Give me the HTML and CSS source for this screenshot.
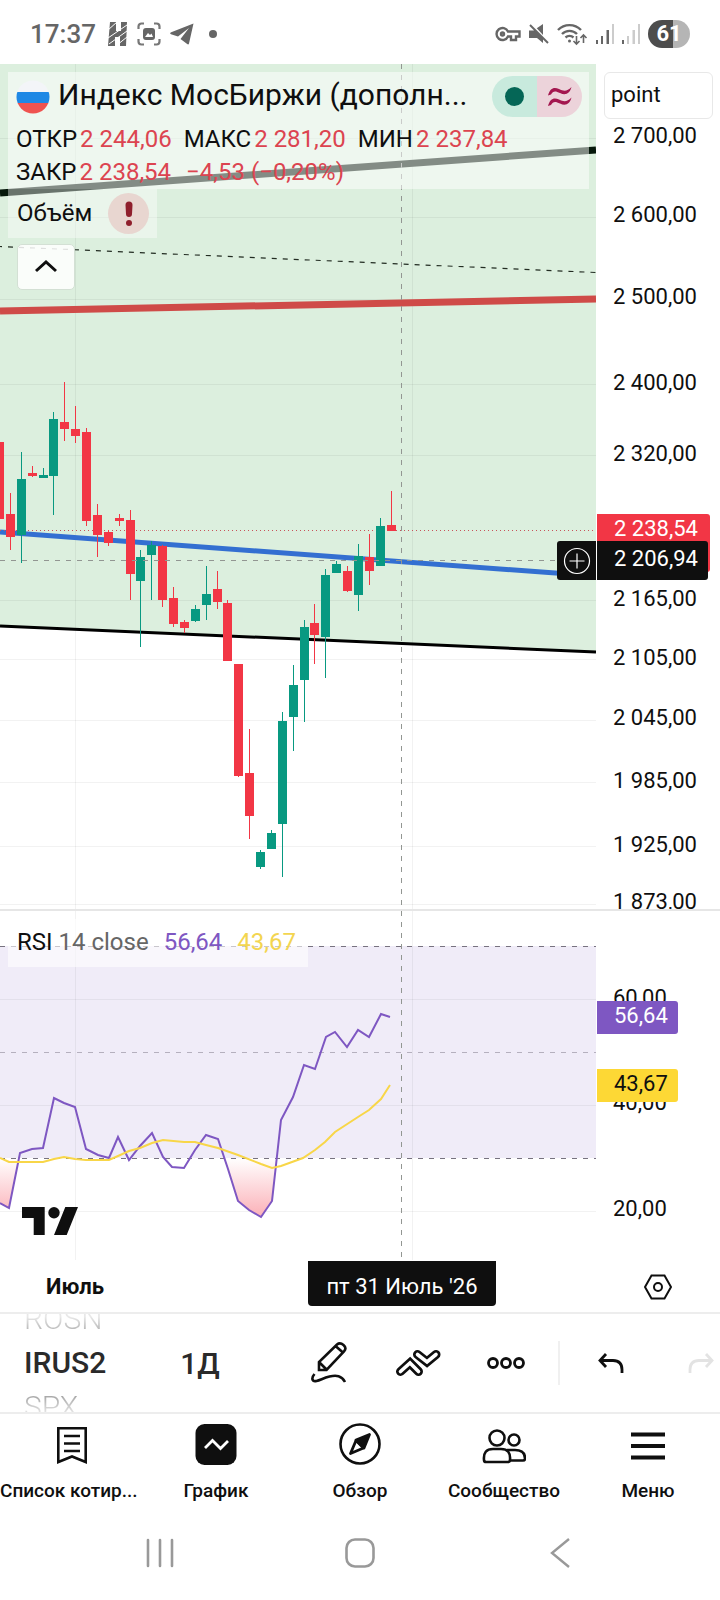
FILE: index.html
```html
<!DOCTYPE html>
<html lang="ru">
<head>
    <meta charset="UTF-8">
    <meta name="viewport" content="width=device-width, initial-scale=1.0">
    <title>IRUS2 – Индекс МосБиржи</title>
    <link rel="stylesheet" href="styles.css">
</head>
<body>
    <header class="status-bar">
        <span class="clock">17:37</span>
        <svg width="20" height="24" viewBox="0 0 20 24">
            <path d="M2 0h6v9h5V0h6l-1 24h-6v-9H7v9H0z" fill="#666"/>
            <path d="M0 8L9 0M0 16L19 3M1 22L19 9M9 23l10-8" stroke="#fff" stroke-width="1"/>
        </svg>
        <svg width="24" height="24" viewBox="0 0 24 24" fill="none" stroke="#777" stroke-width="2.2">
            <path d="M1.500 7V4.500a3 3 0 0 1 3-3H7M17 1.500h2.500a3 3 0 0 1 3 3V7M22.500 17v2.500a3 3 0 0 1-3 3H17M7 22.500H4.500a3 3 0 0 1-3-3V17"/>
            <rect x="6" y="6" width="12" height="12" rx="3" fill="#666" stroke="none"/>
            <path d="M8 15l3-4 2 2 1.500-1.500L16 15z" fill="#fff" stroke="none"/>
        </svg>
        <svg width="24" height="22" viewBox="0 0 24 22" fill="#666">
            <path d="M23.500 0.500L19 20.500c-.3 1-1 1.200-1.800.6l-6.700-5L19 5 8 13.500 1 11.200c-1.200-.4-1.200-1.400.2-2z"/>
        </svg>
        <span class="status-dot"></span>
        <div class="status-right">
            <svg width="26" height="16" viewBox="0 0 26 16" fill="none" stroke="#666" stroke-width="2.400">
                <path d="M13 5.500A6 6 0 1 0 13 10.500H16V14H21V10.500H24.500V5.500z"/>
                <circle cx="7.500" cy="8" r="1.500"/>
            </svg>
            <svg width="20" height="20" viewBox="0 0 20 20">
                <path d="M0 6.500h4.500L14 0v19L8 14H0z" fill="#666"/>
                <path d="M2.500 0L20 19" stroke="#fff" stroke-width="2"/>
                <path d="M1 1l18 18" stroke="#666" stroke-width="2"/>
            </svg>
            <svg width="31" height="24" viewBox="0 0 31 24" fill="none" stroke="#666" stroke-width="2.400">
                <path d="M1 8a16 16 0 0 1 23 0M5 12a10.500 10.500 0 0 1 15 0M8.500 15.500a6 6 0 0 1 8 0"/>
                <circle cx="12.500" cy="19" r="1.500" fill="#666" stroke="none"/>
                <path d="M19.500 14v8M16.500 19l3 3 3-3M26.500 21v-8M23.500 16l3-3 3 3" stroke-width="1.600"/>
            </svg>
            <svg width="18" height="20" viewBox="0 0 18 20" fill="#666">
                <path d="M0 16h2v4H0zM5 12h2v8H5zM10.500 6h2.500v14h-2.500z"/>
                <path d="M16 0h2v20h-2z" fill="#ccc"/>
            </svg>
            <svg width="18" height="20" viewBox="0 0 18 20" fill="#ccc">
                <path d="M0 16h2v4H0z" fill="#666"/>
                <path d="M5 12h2v8H5zM10.500 6h2.500v14h-2.500zM16 0h2v20h-2z"/>
            </svg>
            <span class="battery">61</span>
        </div>
    </header>

    <main class="chart">
        <section class="pane">
            <div class="plot">
                <svg class="plot-svg" height="845" viewBox="0 0 596 845" preserveAspectRatio="xMaxYMin slice">
                    <path d="M0 0H596V588L0 562z" fill="#dcefde"/>
                    <path class="grid" d="M0 74.500H596M0 153.500H596M0 235.500H596M0 320.500H596M0 391.500H596M0 536.500H596M0 595.500H596M0 656.500H596M0 718.500H596M0 782.500H596M0 840.500H596M75.500 0V845M412.500 0V845"/>
                    <path d="M0 129L596 86" stroke="#06180b" stroke-width="7"/>
                    <path d="M0 182.500L596 208.500" stroke="#222c22" stroke-width="1.200" stroke-dasharray="5 6" stroke-dashoffset="3"/>
                    <path d="M0 247L596 235" stroke="#cf4b48" stroke-width="7"/>
                    <path d="M0 468L596 512" stroke="#336fd1" stroke-width="5"/>
                    <path d="M0 562L596 588" stroke="#000" stroke-width="3"/>
                    <path d="M0 466.500H596" stroke="#c8525a" stroke-dasharray="1 3"/>
                    <g id="candles"></g>
                    <path class="crosshair" d="M0 496.500H596M401.500 0V845"/>
                </svg>

                <div class="legend">
                    <div class="legend-main">
                        <div class="legend-title">
                            <svg width="34" height="34" viewBox="0 0 34 34">
                                <clipPath id="flag"><circle cx="17" cy="17" r="16.500"/></clipPath>
                                <g clip-path="url(#flag)">
                                    <path d="M0 0h34v12H0z" fill="#f3f5f8"/>
                                    <path d="M0 12h34v11H0z" fill="#1e88e5"/>
                                    <path d="M0 23h34v11H0z" fill="#ef5350"/>
                                </g>
                            </svg>
                            <h1>Индекс МосБиржи (дополн...</h1>
                            <button class="status-pill" aria-label="Статус рынка">
                                <span class="pill-open"><span class="pill-dot"></span></span>
                                <span class="pill-delay">
                                    <svg width="24" height="20" viewBox="0 0 24 20" fill="#a3174f">
                                        <path d="M0 8.500C2 1 6-.5 11 2c5 2.500 8 2.500 12.500-2C22 6 18 9 12 6 7 3.500 5 4 3 7.500z"/>
                                        <path d="M0 19C2 11.500 6 10 11 12.500c5 2.500 8 2.500 12.500-2-1.500 6-5.500 9-11.500 6-5-2.500-7-2-9 1.500z"/>
                                    </svg>
                                </span>
                            </button>
                        </div>
                        <div class="ohlc">
                            <span>ОТКР<b>2 244,06</b></span>
                            <span>МАКС<b>2 281,20</b></span>
                            <span>МИН<b>2 237,84</b></span>
                            <span>ЗАКР<b>2 238,54</b></span>
                            <span><b>−4,53 (−0,20%)</b></span>
                        </div>
                    </div>
                    <div class="legend-volume">
                        <span>Объём</span>
                        <button class="alert" aria-label="Ошибка">
                            <svg width="10" height="26" viewBox="0 0 10 26" fill="#8f1f2c">
                                <path d="M1.500 4a3.500 3.500 0 0 1 7 0L8 13a3 3 0 0 1-6 0z"/>
                                <circle cx="5" cy="22" r="3"/>
                            </svg>
                        </button>
                    </div>
                    <button class="collapse" aria-label="Свернуть">
                        <svg width="22" height="14" viewBox="0 0 22 14" fill="none" stroke="#0f0f0f" stroke-width="3">
                            <path d="M1 11L11 2l10 9"/>
                        </svg>
                    </button>
                </div>

                <button class="crosshair-add" aria-label="Добавить">
                    <svg width="28" height="28" viewBox="0 0 28 28" fill="none" stroke="#fff" stroke-width="1.200">
                        <circle cx="14" cy="14" r="12.500"/>
                        <path d="M14 6.500v15M6.500 14h15"/>
                    </svg>
                </button>
            </div>
            <div class="axis">
                <svg width="124" height="845" viewBox="0 0 124 845">
                    <g class="scale-text">
                        <text x="17" y="79">2 700,00</text>
                        <text x="17" y="158">2 600,00</text>
                        <text x="17" y="240">2 500,00</text>
                        <text x="17" y="326">2 400,00</text>
                        <text x="17" y="397">2 320,00</text>
                        <text x="17" y="542">2 165,00</text>
                        <text x="17" y="601">2 105,00</text>
                        <text x="17" y="661">2 045,00</text>
                        <text x="17" y="724">1 985,00</text>
                        <text x="17" y="788">1 925,00</text>
                        <text x="17" y="845">1 873,00</text>
                    </g>
                    <path d="M1 450h110a3 3 0 0 1 3 3v52a3 3 0 0 1-3 3H1z" fill="#f23645"/>
                    <path d="M1 477h108a3 3 0 0 1 3 3v33a3 3 0 0 1-3 3H1z" fill="#0f0f0f"/>
                    <g class="scale-text light">
                        <text x="18" y="472">2 238,54</text>
                        <text x="18" y="502">2 206,94</text>
                    </g>
                </svg>
                <button class="unit">point</button>
            </div>
        </section>

        <section class="pane pane-rsi">
            <div class="plot">
                <svg class="plot-svg" height="349" viewBox="0 0 596 349" preserveAspectRatio="xMaxYMin slice">
                    <defs>
                        <linearGradient id="oversold" gradientUnits="userSpaceOnUse" x1="0" y1="247" x2="0" y2="306">
                            <stop offset="0" stop-color="#fff"/>
                            <stop offset="1" stop-color="#fbb0b7"/>
                        </linearGradient>
                    </defs>
                    <path d="M0 35h596v212H0z" fill="#f0ecf8"/>
                    <path class="grid" d="M0 88.500H596M0 194.500H596M0 300.500H596M75.500 0V349M412.500 0V349"/>
                    <path d="M0 247V292L9 297L19 247zM225 247L228 258L238 290L249 299L261 306L272 290L276 247z" fill="url(#oversold)"/>
                    <path d="M0 35.500H596M0 247.500H596" stroke="#77727f" stroke-dasharray="5 6"/>
                    <path d="M0 141.500H596" stroke="#b5b0be" stroke-dasharray="5 6"/>
                    <polyline class="rsi" points="0,292 9,297 20,242 32,238 43,237 54,187 64,192 75,196 86,238 98,244 109,247 118,226 129,249 140,235 152,222 163,246 172,256 184,257 195,239 206,224 218,228 228,258 238,290 249,299 261,306 272,290 281,209 293,186 304,154 315,158 326,126 335,121 347,136 358,119 369,126 381,103 390,106"/>
                    <polyline class="rsi-ma" points="0,247 9,251 20,251 43,251 54,248 64,246 75,248 86,249 109,249 118,245 129,240 140,237 152,232 163,229 184,231 195,231 206,234 218,237 238,244 261,253 272,257 281,255 303,247 315,239 325,231 335,221 358,206 369,199 381,188 390,174"/>
                    <path class="crosshair" d="M401.500 0V349"/>
                </svg>
                <div class="rsi-legend">
                    <span>RSI <i>14 close</i></span>
                    <span class="rsi-value">56,64</span>
                    <span class="ma-value">43,67</span>
                </div>
                <a class="logo" href="#" aria-label="TradingView">
                    <svg width="56" height="28" viewBox="0 0 56 28" fill="#0f0f0f">
                        <path d="M0 0h22.700v28H11.700V11H0zM43.300 0H56L44.700 28H32z"/>
                        <circle cx="32" cy="5.700" r="5.700"/>
                    </svg>
                </a>
            </div>
            <div class="axis">
                <svg width="124" height="349" viewBox="0 0 124 349">
                    <g class="scale-text">
                        <text x="17" y="94">60,00</text>
                        <text x="17" y="199">40,00</text>
                        <text x="17" y="305">20,00</text>
                    </g>
                    <path d="M1 90h78a3 3 0 0 1 3 3v27a3 3 0 0 1-3 3H1z" fill="#7e57c2"/>
                    <path d="M1 158h78a3 3 0 0 1 3 3v27a3 3 0 0 1-3 3H1z" fill="#fdd835"/>
                    <text class="scale-text light" x="18" y="112">56,64</text>
                    <text class="scale-text" x="18" y="180">43,67</text>
                </svg>
            </div>
        </section>

        <div class="time-axis">
            <div class="ticks">
                <b class="month">Июль</b>
                <span class="time-label">пт 31 Июль '26</span>
            </div>
            <button class="scale-settings" aria-label="Настройки шкалы">
                <svg width="28" height="26" viewBox="0 0 28 26" fill="none" stroke="#0f0f0f" stroke-width="2">
                    <path d="M7.500 1.500h13L27 13l-6.500 11.500h-13L1 13z"/>
                    <circle cx="14" cy="13" r="4"/>
                </svg>
            </button>
        </div>
    </main>

    <div class="toolbar">
        <div class="symbol-wheel">
            <button class="faded above">ROSN</button>
            <button class="current">IRUS2</button>
            <button class="faded below">SPX</button>
        </div>
        <button class="interval">1Д</button>
        <button class="tool" aria-label="Рисование">
            <svg width="38" height="44" viewBox="0 0 38 44" fill="none" stroke="#0f0f0f" stroke-width="2.600">
                <path d="M8 29V21L26 3.500q3-2.500 6.500.5t.5 6.500L15.500 29zM8 21l8 8M24.500 5l8 7"/>
                <path d="M3.500 33C0 37 1 41 5.500 40c4-1 7-3 13-4.500 7-1.500 12-1 15.500 5.500"/>
            </svg>
        </button>
        <button class="tool" aria-label="Индикаторы">
            <svg width="46" height="28" viewBox="0 0 46 28" fill="none" stroke-linecap="round" stroke-linejoin="miter">
                <path d="M5.500 22.500L15 14l8.500 8.500M22.500 5.500L32 13l9-7.500" stroke="#0f0f0f" stroke-width="9"/>
                <path d="M5.500 22.500L15 14l8.500 8.500M22.500 5.500L32 13l9-7.500" stroke="#fff" stroke-width="3.600"/>
            </svg>
        </button>
        <button class="tool" aria-label="Ещё">
            <svg width="40" height="14" viewBox="0 0 40 14" fill="none" stroke="#0f0f0f" stroke-width="2.800">
                <circle cx="7" cy="7" r="4.500"/>
                <circle cx="20" cy="7" r="4.500"/>
                <circle cx="33" cy="7" r="4.500"/>
            </svg>
        </button>
        <span class="divider"></span>
        <button class="history" aria-label="Отменить">
            <svg width="26" height="20" viewBox="0 0 26 20" fill="none" stroke="#0f0f0f" stroke-width="2.800">
                <path d="M8 1L2 7.500 8 14M2 7.500h13q9 0 9 9V20"/>
            </svg>
        </button>
        <button class="history redo" aria-label="Повторить" disabled>
            <svg width="26" height="20" viewBox="0 0 26 20" fill="none" stroke="#e3e3e3" stroke-width="2.800">
                <path d="M18 1l6 6.500L18 14M24 7.500H11q-9 0-9 9V20"/>
            </svg>
        </button>
    </div>

    <nav class="tabs">
        <a href="#">
            <svg width="42" height="42" viewBox="0 0 42 42" fill="none" stroke="#0f0f0f" stroke-width="2.600">
                <path d="M7.300 5.300h27.400V39L21 33.500 7.300 39zM13 13h16M13 20.500h16M13 28h16"/>
            </svg>
            <span>Список котир...</span>
        </a>
        <a href="#" aria-current="page">
            <svg width="42" height="42" viewBox="0 0 42 42" fill="none">
                <rect x="0.500" y="1" width="41" height="41" rx="9" fill="#0f0f0f"/>
                <path d="M10 25l7.500-7.500 8 8L33 18" stroke="#fff" stroke-width="2.800"/>
            </svg>
            <span>График</span>
        </a>
        <a href="#">
            <svg width="42" height="42" viewBox="0 0 42 42" fill="none" stroke="#0f0f0f">
                <circle cx="21" cy="21" r="19.500" stroke-width="2.600"/>
                <path d="M30.500 11.500L17 17l8 8z" fill="#0f0f0f" stroke-width="2.800" stroke-linejoin="round"/>
                <path d="M17 17.500l7.500 7.500L11.500 30.500z" stroke-width="2.800" stroke-linejoin="round"/>
            </svg>
            <span>Обзор</span>
        </a>
        <a href="#">
            <svg width="44" height="42" viewBox="0 0 44 42" fill="none" stroke="#0f0f0f" stroke-width="2.600">
                <circle cx="15" cy="15" r="7.500"/>
                <circle cx="32" cy="17" r="5.500"/>
                <path d="M2 37q-1-11 9-11h8q10 0 9 11-.2 2-2 2H4q-1.800 0-2-2z"/>
                <path d="M25 27h8q10 0 10 8.500 0 2-2 2H27.500"/>
            </svg>
            <span>Сообщество</span>
        </a>
        <a href="#">
            <svg width="42" height="42" viewBox="0 0 42 42" fill="#0f0f0f">
                <path d="M4 9.500h34v4H4zM4 21h34v4H4zM4 32.500h34v4H4z"/>
            </svg>
            <span>Меню</span>
        </a>
    </nav>

    <footer class="system-nav">
        <button aria-label="Недавние">
            <svg width="28" height="30" viewBox="0 0 28 30" stroke="#999" stroke-width="2.600" stroke-linecap="round">
                <path d="M2 2v26M14 2v26M26 2v26"/>
            </svg>
        </button>
        <button aria-label="Домой">
            <svg width="30" height="30" viewBox="0 0 30 30" fill="none" stroke="#999" stroke-width="2.600">
                <rect x="1.500" y="1.500" width="27" height="27" rx="8.500"/>
            </svg>
        </button>
        <button aria-label="Назад">
            <svg width="20" height="30" viewBox="0 0 20 30" fill="none" stroke="#999" stroke-width="2.400">
                <path d="M19 1L2 15l17 14"/>
            </svg>
        </button>
    </footer>

    <script>
        // left, high, body top, body bottom, low, rising
        const candles = [
            [-5, 378, 378, 455, 455, 0],
            [6, 429, 450, 473, 486, 0],
            [17, 388, 415, 471, 499, 1],
            [28, 402, 409, 412, 413, 0],
            [39, 404, 411, 414, 414, 1],
            [49, 348, 355, 412, 451, 1],
            [60, 318, 358, 365, 377, 0],
            [71, 342, 365, 372, 379, 0],
            [82, 364, 368, 457, 462, 0],
            [93, 440, 451, 471, 493, 0],
            [104, 466, 468, 479, 482, 0],
            [115, 450, 454, 457, 462, 0],
            [126, 446, 456, 510, 536, 0],
            [136, 486, 493, 517, 583, 1],
            [147, 477, 481, 491, 536, 1],
            [158, 481, 482, 536, 543, 0],
            [169, 523, 534, 560, 563, 0],
            [180, 556, 558, 564, 569, 0],
            [191, 541, 545, 557, 558, 1],
            [202, 502, 530, 541, 556, 1],
            [213, 507, 525, 538, 545, 0],
            [223, 536, 539, 597, 597, 0],
            [234, 600, 600, 712, 713, 0],
            [245, 665, 709, 752, 775, 0],
            [256, 786, 788, 803, 805, 1],
            [267, 766, 769, 785, 785, 1],
            [278, 648, 657, 760, 813, 1],
            [289, 601, 621, 653, 687, 1],
            [300, 556, 563, 616, 658, 1],
            [310, 540, 559, 571, 600, 0],
            [321, 505, 511, 573, 614, 1],
            [332, 497, 500, 509, 509, 1],
            [343, 502, 507, 527, 528, 0],
            [354, 480, 492, 531, 547, 1],
            [365, 470, 493, 507, 521, 0],
            [376, 454, 462, 502, 502, 1],
            [387, 427, 461, 467, 467, 0]
        ];

        document.getElementById('candles').innerHTML = candles.map(([x, high, top, bottom, low, up]) =>
            `<path class="${up ? 'up' : 'down'}" d="M${x} ${top}h9V${bottom}h-9zM${x + 4} ${high}h1V${low}h-1z"/>`
        ).join('');
    </script>
</body>
</html>
```
FILE: styles.css
```css
* {
    box-sizing: border-box;
}
body {
    margin: 0;
    font-family: Roboto, "Noto Sans", sans-serif;
    color: #0f0f0f;
    background-color: #fff;
}
button {
    margin: 0;
    padding: 0;
    border: none;
    background: none;
    font: inherit;
    color: inherit;
    cursor: pointer;
}
a {
    color: inherit;
    text-decoration: none;
}
svg {
    display: block;
    flex: none;
}

/* status bar */
.status-bar {
    display: flex;
    align-items: center;
    gap: 9px;
    height: 64px;
    padding: 4px 30px 0;
}
.clock {
    margin-right: 3px;
    font-size: 26px;
    font-weight: 500;
    color: #666;
}
.status-dot {
    width: 8px;
    height: 8px;
    margin-left: 6px;
    border-radius: 50%;
    background-color: #666;
}
.status-right {
    display: flex;
    align-items: center;
    gap: 8px;
    margin-left: auto;
}
.battery {
    width: 42px;
    border-radius: 14px;
    background: linear-gradient(90deg, #4d4d4d 60%, #b5b5b5 60%);
    color: #fff;
    font-size: 22px;
    font-weight: 700;
    line-height: 28px;
    text-align: center;
}

/* chart */
.pane {
    display: flex;
    border-bottom: 2px solid #e6e6e6;
}
.pane-rsi {
    border-bottom: none;
}
.plot {
    position: relative;
    flex: 1;
    min-width: 0;
}
.plot-svg {
    width: 100%;
}
.axis {
    position: relative;
    width: 124px;
}
.grid {
    stroke: rgba(0, 0, 0, 0.05);
}
.crosshair {
    fill: none;
    stroke: #929692;
    stroke-dasharray: 5 6;
}
.up {
    fill: #089981;
}
.down {
    fill: #f23645;
}
.rsi,
.rsi-ma {
    fill: none;
    stroke: #7e57c2;
    stroke-width: 2;
}
.rsi-ma {
    stroke: #f8d648;
}
.scale-text {
    fill: #0f0f0f;
    font-size: 22px;
}
.light {
    fill: #fff;
}
.unit {
    position: absolute;
    top: 8px;
    left: 8px;
    right: 7px;
    height: 47px;
    padding: 0 6px 2px;
    border: 1px solid #e8e8e8;
    border-radius: 6px;
    background-color: #fff;
    font-size: 22px;
    text-align: left;
}

/* legend */
.legend {
    position: absolute;
    top: 8px;
    left: 8px;
    right: 7px;
}
.legend-main {
    height: 117px;
    padding: 4px 7px 0 8px;
    background-color: rgba(255, 255, 255, 0.5);
}
.legend-title {
    display: flex;
    align-items: center;
    gap: 8px;
    height: 41px;
}
.legend-title h1 {
    flex: 1;
    min-width: 0;
    margin: 0;
    padding-bottom: 4px;
    overflow: hidden;
    font-size: 30px;
    font-weight: 400;
    white-space: nowrap;
}
.status-pill {
    display: flex;
    width: 90px;
    height: 41px;
    border-radius: 21px;
    overflow: hidden;
}
.pill-open,
.pill-delay {
    display: flex;
    flex: 1;
    align-items: center;
    justify-content: center;
    height: 100%;
    background-color: #c8eadd;
}
.pill-delay {
    background-color: #ecd3da;
}
.pill-dot {
    width: 19px;
    height: 19px;
    border-radius: 50%;
    background-color: #056656;
}
.ohlc {
    display: flex;
    flex-wrap: wrap;
    column-gap: 12px;
    padding-top: 6px;
    font-size: 24px;
    line-height: 33px;
}
.ohlc b {
    padding-left: 3px;
    font-weight: 400;
    color: #dc4450;
}
.legend-volume {
    display: flex;
    align-items: center;
    gap: 16px;
    width: 149px;
    height: 49px;
    padding-left: 9px;
    background-color: rgba(255, 255, 255, 0.4);
    font-size: 24px;
    line-height: 24px;
}
.legend-volume span {
    padding-bottom: 2px;
}
.alert {
    display: flex;
    align-items: center;
    justify-content: center;
    width: 41px;
    height: 41px;
    border-radius: 50%;
    background-color: #e8d6d0;
}
.collapse {
    display: flex;
    align-items: center;
    justify-content: center;
    width: 58px;
    height: 46px;
    margin: 6px 0 0 9px;
    border: 1px solid #d3e0d4;
    border-radius: 5px;
    background-color: rgba(255, 255, 255, 0.85);
}
.crosshair-add {
    position: absolute;
    top: 477px;
    right: 0;
    display: flex;
    align-items: center;
    justify-content: center;
    width: 39px;
    height: 39px;
    border-radius: 3px 0 0 3px;
    background-color: #0f0f0f;
}

/* rsi */
.rsi-legend {
    position: absolute;
    top: 8px;
    left: 8px;
    display: flex;
    gap: 15px;
    height: 48px;
    padding: 0 12px 0 9px;
    background-color: rgba(255, 255, 255, 0.6);
    font-size: 24px;
    line-height: 47px;
}
.rsi-legend i {
    font-style: normal;
    color: #666;
}
.rsi-value {
    color: #7e57c2;
}
.ma-value {
    color: #f3d550;
}
.logo {
    position: absolute;
    bottom: 25px;
    left: 22px;
}

/* time axis */
.time-axis {
    display: flex;
    height: 54px;
    border-bottom: 2px solid #ededed;
    font-size: 22px;
}
.ticks {
    position: relative;
    flex: 1;
    line-height: 54px;
}
.month {
    display: block;
    width: 150px;
    text-align: center;
}
.time-label {
    position: absolute;
    top: 1px;
    left: 308px;
    width: 188px;
    height: 45px;
    border-radius: 0 0 4px 4px;
    background-color: #0f0f0f;
    color: #fff;
    line-height: 52px;
    text-align: center;
    white-space: nowrap;
}
.scale-settings {
    display: flex;
    align-items: center;
    justify-content: center;
    width: 124px;
    padding-top: 2px;
}

/* toolbar */
.toolbar {
    display: flex;
    align-items: center;
    height: 100px;
    border-bottom: 2px solid #ededed;
    overflow: hidden;
}
.symbol-wheel {
    display: flex;
    flex: none;
    flex-direction: column;
    justify-content: center;
    width: 157px;
    height: 98px;
    padding-left: 24px;
    overflow: hidden;
}
.symbol-wheel button {
    flex: none;
    font-size: 30px;
    line-height: 44px;
    text-align: left;
}
.symbol-wheel .faded {
    background: linear-gradient(#e8e8e8 45%, #a8a8a8 85%);
    background-clip: text;
    color: transparent;
    font-weight: 300;
}
.symbol-wheel .below {
    background: linear-gradient(#a0a0a0 20%, #e0e0e0 60%);
    background-clip: text;
}
.symbol-wheel .current,
.interval {
    color: #2a2a2a;
    font-weight: 500;
}
.interval {
    flex: none;
    width: 86px;
    margin-right: 43px;
    font-size: 30px;
}
.tool {
    display: flex;
    flex: none;
    justify-content: center;
    width: 88px;
}
.divider {
    flex: none;
    width: 2px;
    height: 44px;
    margin-left: 8px;
    background-color: #f0f0f0;
}
.history {
    display: flex;
    flex: none;
    justify-content: center;
    width: 102px;
}
.redo {
    width: 78px;
}

/* bottom tabs */
.tabs {
    display: grid;
    grid-template-columns: repeat(5, minmax(0, 1fr));
    height: 106px;
    padding-top: 9px;
}
.tabs a {
    display: flex;
    flex-direction: column;
    align-items: center;
    gap: 14px;
    font-size: 19px;
    font-weight: 500;
    line-height: 24px;
    white-space: nowrap;
}
.tabs a:first-child span {
    align-self: flex-start;
}

/* system navigation */
.system-nav {
    display: grid;
    grid-template-columns: repeat(3, 1fr);
    height: 80px;
    padding: 0 60px 14px;
}
.system-nav button {
    display: flex;
    align-items: center;
    justify-content: center;
}
```
